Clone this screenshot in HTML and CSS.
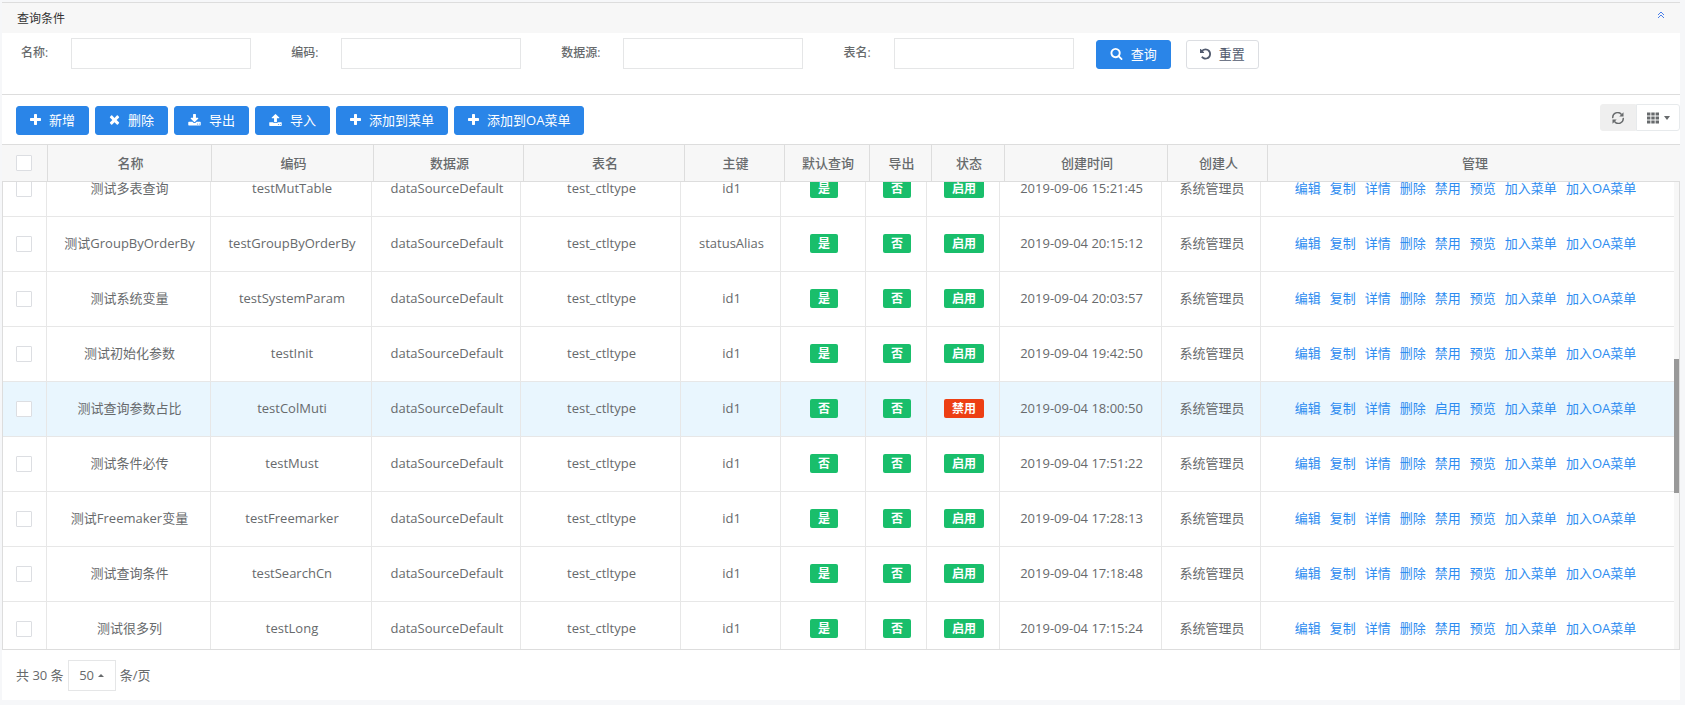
FILE: index.html
```
<!DOCTYPE html>
<html lang="zh-CN">
<head>
<meta charset="utf-8">
<title>查询条件</title>
<link rel="stylesheet" href="styles.css">
</head>
<body>
<svg class="sprite" aria-hidden="true">
  <symbol id="i-plus" viewBox="192 128 1408 1536"><path d="M1600 736v192q0 40-28 68t-68 28h-416v416q0 40-28 68t-68 28h-192q-40 0-68-28t-28-68v-416h-416q-40 0-68-28t-28-68v-192q0-40 28-68t68-28h416v-416q0-40 28-68t68-28h192q40 0 68 28t28 68v416h416q40 0 68 28t28 68z"/></symbol>
  <symbol id="i-times" viewBox="192 192 1408 1536"><path d="M1490 1322q0 40-28 68l-136 136q-28 28-68 28t-68-28l-294-294-294 294q-28 28-68 28t-68-28l-136-136q-28-28-28-68t28-68l294-294-294-294q-28-28-28-68t28-68l136-136q28-28 68-28t68 28l294 294 294-294q28-28 68-28t68 28l136 136q28 28 28 68t-28 68l-294 294 294 294q28 28 28 68z"/></symbol>
  <symbol id="i-search" viewBox="64 128 1664 1664"><path d="M1216 832q0-185-131.5-316.5t-316.5-131.5-316.5 131.5-131.5 316.5 131.5 316.5 316.5 131.5 316.5-131.5 131.5-316.5zm512 832q0 52-38 90t-90 38q-54 0-90-38l-343-342q-179 124-399 124-143 0-273.5-55.5t-225-150-150-225-55.5-273.5 55.5-273.5 150-225 225-150 273.5-55.5 273.5 55.5 225 150 150 225 55.5 273.5q0 220-124 399l343 343q37 37 37 90z"/></symbol>
  <symbol id="i-download" viewBox="64 0 1664 1600"><path d="M1344 1344q0-26-19-45t-45-19-45 19-19 45 19 45 45 19 45-19 19-45zm256 0q0-26-19-45t-45-19-45 19-19 45 19 45 45 19 45-19 19-45zm128-224v320q0 40-28 68t-68 28h-1472q-40 0-68-28t-28-68v-320q0-40 28-68t68-28h465l135 136q58 56 136 56t136-56l136-136h464q40 0 68 28t28 68zm-325-569q17 41-14 70l-448 448q-18 19-45 19t-45-19l-448-448q-31-29-14-70 17-39 59-39h256v-448q0-26 19-45t45-19h256q26 0 45 19t19 45v448h256q42 0 59 39z"/></symbol>
  <symbol id="i-upload" viewBox="64 64 1664 1600"><path d="M1344 1472q0-26-19-45t-45-19-45 19-19 45 19 45 45 19 45-19 19-45zm256 0q0-26-19-45t-45-19-45 19-19 45 19 45 45 19 45-19 19-45zm128-224v320q0 40-28 68t-68 28h-1472q-40 0-68-28t-28-68v-320q0-40 28-68t68-28h427q21 56 70.5 92t110.5 36h256q61 0 110.5-36t70.5-92h427q40 0 68 28t28 68zm-325-648q-17 40-59 40h-256v448q0 26-19 45t-45 19h-256q-26 0-45-19t-19-45v-448h-256q-42 0-59-40-17-39 14-69l448-448q18-19 45-19t45 19l448 448q31 30 14 69z"/></symbol>
  <symbol id="i-undo" viewBox="128 128 1536 1536"><path d="M1664 896q0 156-61 298t-164 245-245 164-298 61q-172 0-327-72.5t-264-204.5q-7-10-6.5-22.5t8.5-20.5l137-138q10-9 25-9 16 2 23 12 73 95 179 147t225 52q104 0 198.5-40.5t163.5-109.5 109.5-163.5 40.5-198.5-40.5-198.5-109.5-163.5-163.5-109.5-198.5-40.5q-98 0-188 35.5t-160 101.5l137 138q31 30 14 69-17 40-59 40h-448q-26 0-45-19t-19-45v-448q0-42 40-59 39-17 69 14l130 129q107-101 244.5-156.5t284.5-55.5q156 0 298 61t245 164 164 245 61 298z"/></symbol>
  <symbol id="i-refresh" viewBox="0 0 12 12"><path d="M0.800 6.200A4.900 4.900 0 0 1 9.600 2.600M11.200 5.800A4.900 4.900 0 0 1 2.400 9.400" fill="none" stroke="currentColor" stroke-width="1.400"/><path d="M11.500 0.300V4.500H7.300zM0.500 11.700V7.500H4.700z"/></symbol>
  <symbol id="i-grid" viewBox="0 0 12 12"><path d="M0 0.500h3.400v3H0zM4.300 0.500h3.400v3H4.300zM8.600 0.500H12v3H8.600zM0 4.500h3.400v3H0zM4.300 4.500h3.400v3H4.300zM8.600 4.500H12v3H8.600zM0 8.500h3.400v3H0zM4.300 8.500h3.400v3H4.300zM8.600 8.500H12v3H8.600z"/></symbol>
  <symbol id="i-up" viewBox="0 0 8 8"><path d="M1 4l3-3 3 3M1 7l3-3 3 3" fill="none" stroke="currentColor" stroke-width="1"/></symbol>
</svg>

<main class="panel">
  <header class="panel-head">
    <h1 class="panel-title">查询条件</h1>
    <button class="collapse" type="button" aria-label="收起"><svg class="ico-up"><use href="#i-up"/></svg></button>
  </header>

  <form class="search" onsubmit="return false">
    <div class="field"><label for="f-name">名称:</label><input id="f-name" type="text"></div>
    <div class="field"><label for="f-code">编码:</label><input id="f-code" type="text"></div>
    <div class="field"><label for="f-source">数据源:</label><input id="f-source" type="text"></div>
    <div class="field"><label for="f-table">表名:</label><input id="f-table" type="text"></div>
    <div class="search-actions">
      <button class="btn btn-primary" type="submit"><svg class="ico ico-wide"><use href="#i-search"/></svg>查询</button>
      <button class="btn btn-plain" type="reset"><svg class="ico"><use href="#i-undo"/></svg>重置</button>
    </div>
  </form>

  <div class="toolbar">
    <div class="toolbar-actions">
      <button class="btn btn-primary" type="button"><svg class="ico"><use href="#i-plus"/></svg>新增</button>
      <button class="btn btn-primary" type="button"><svg class="ico"><use href="#i-times"/></svg>删除</button>
      <button class="btn btn-primary" type="button"><svg class="ico ico-wide"><use href="#i-download"/></svg>导出</button>
      <button class="btn btn-primary" type="button"><svg class="ico ico-wide"><use href="#i-upload"/></svg>导入</button>
      <button class="btn btn-primary" type="button"><svg class="ico"><use href="#i-plus"/></svg>添加到菜单</button>
      <button class="btn btn-primary" type="button"><svg class="ico"><use href="#i-plus"/></svg>添加到OA菜单</button>
    </div>
    <div class="view-tools">
      <button class="tool tool-refresh" type="button" aria-label="刷新"><svg class="ico-tool"><use href="#i-refresh"/></svg></button>
      <button class="tool tool-columns" type="button" aria-label="列"><svg class="ico-tool"><use href="#i-grid"/></svg><span class="caret"></span></button>
    </div>
  </div>

  <table class="grid grid-head">
    <colgroup><col class="h-check"><col class="h-name"><col class="h-code"><col class="h-source"><col class="h-table"><col class="h-key"><col class="h-default"><col class="h-export"><col class="h-status"><col class="h-time"><col class="h-user"><col></colgroup>
    <thead><tr>
      <th><input type="checkbox" aria-label="全选"></th><th>名称</th><th>编码</th><th>数据源</th><th>表名</th><th>主键</th><th>默认查询</th><th>导出</th><th>状态</th><th>创建时间</th><th>创建人</th><th>管理</th>
    </tr></thead>
  </table>

  <div class="scroll">
    <div class="scroll-view">
      <table class="grid grid-body">
        <colgroup><col class="b-check"><col class="b-name"><col class="b-code"><col class="b-source"><col class="b-table"><col class="b-key"><col class="b-default"><col class="b-export"><col class="b-status"><col class="b-time"><col class="b-user"><col></colgroup>
        <tbody id="rows"></tbody>
      </table>
    </div>
    <div class="rail"><div class="thumb"></div></div>
  </div>

  <footer class="pager">
    <span>共 30 条</span>
    <button class="page-size" type="button">50<span class="caret caret-up"></span></button>
    <span>条/页</span>
  </footer>
</main>
<script src="rows.js"></script>
</body>
</html>
```
FILE: styles.css
```
* { box-sizing: border-box; }

body {
  margin: 0;
  height: 100vh;
  padding: 2px 5px 5px 2px;
  background: #f6f7f9;
  color: #676a6c;
  font: 13px/18px "Open Sans", "Noto Sans CJK SC", sans-serif;
}

button, input { font: inherit; color: inherit; }
button { cursor: pointer; }
.sprite { display: none; }
svg { display: block; fill: currentColor; }

.panel {
  height: 100%;
  display: flex;
  flex-direction: column;
  background: #fff;
  border-top: 1px solid #dddddd;
}

.panel-head {
  display: flex;
  justify-content: space-between;
  align-items: center;
  height: 30px;
  padding: 0 15px;
  background: #f7f7f7;
}
.panel-title { margin: 0; padding-top: 2px; font-size: 12px; font-weight: 400; color: #333; }
.collapse { padding: 0 0 6px; border: 0; background: none; color: #4a7fe8; }
.ico-up { width: 8px; height: 8px; }

.search {
  display: flex;
  flex-wrap: wrap;
  align-items: flex-start;
  padding: 5px 19px 25px;
  border-bottom: 1px solid #dddddd;
}
.field { display: flex; align-items: flex-start; margin-right: 40px; }
.field label { margin-right: 23px; padding-top: 6px; font-size: 12px; font-weight: 500; }
.field input {
  width: 180px;
  height: 31px;
  padding: 0 8px;
  border: 1px solid #e5e6e7;
  background: #fff;
}
.field:nth-child(4) { margin-right: 22px; }
.search-actions { display: flex; gap: 15px; padding-top: 2px; }

.btn {
  display: flex;
  align-items: center;
  gap: 8px;
  height: 29px;
  padding: 0 13px 2px;
  border: 1px solid transparent;
  border-radius: 3px;
  white-space: nowrap;
}
.btn-primary { background: #2a85e8; border-color: #2a85e8; color: #fff; }
.btn-plain { background: #fff; border-color: #dcdee2; color: #515a6e; }
.ico { width: 11px; height: 12px; }
.ico-wide { width: 13px; }

.toolbar {
  display: flex;
  justify-content: space-between;
  align-items: flex-start;
  padding: 9px 0 9px 14px;
}
.toolbar-actions { display: flex; gap: 6px; padding-top: 2px; }
.view-tools { display: flex; }
.tool {
  display: flex;
  align-items: center;
  justify-content: center;
  gap: 5px;
  height: 27px;
  padding: 0;
  border: 1px solid #e7eaec;
}
.tool-refresh { width: 36px; background: #efefef; border-color: #efefef; border-radius: 3px 0 0 3px; }
.tool-columns { width: 44px; background: #fff; border-radius: 0 3px 3px 0; }
.ico-tool { width: 12px; height: 12px; }
.caret {
  border: 3px solid transparent;
  border-top: 4px solid currentColor;
  border-bottom: 0;
}
.caret-up { border-top: 0; border-bottom: 3px solid currentColor; }

.grid { width: 100%; table-layout: fixed; border-collapse: separate; border-spacing: 0; }
.grid th, .grid td { padding: 0 0 0 2px; text-align: center; vertical-align: middle; white-space: nowrap; }
.grid th:last-child, .grid td:last-child { border-right: 0; }
.grid th:first-child, .grid td:first-child { padding: 0 2px 0 0; }

.grid-head { background: #f7f7f7; border-top: 1px solid #dddddd; border-bottom: 1px solid #dddddd; }
.grid-head th { height: 36px; font-weight: 500; border-right: 1px solid #dddddd; }
.grid-body td { height: 55px; border-right: 1px solid #e7e7e7; border-bottom: 1px solid #e7e7e7; }
.grid-body td:not(:first-child) { padding-bottom: 2px; }
.grid-body td:last-child { padding-right: 6px; }
.grid-body .active { background: #e9f6fe; }

.h-check { width: 46px; }
.h-name { width: 164px; }
.h-code { width: 162px; }
.h-source { width: 150px; }
.h-table { width: 161px; }
.h-key { width: 100px; }
.h-default { width: 85px; }
.h-export { width: 62px; }
.h-status { width: 73px; }
.h-time { width: 163px; }
.h-user { width: 100px; }

.b-check { width: 44px; }
.b-name { width: 164px; }
.b-code { width: 161px; }
.b-source { width: 149px; }
.b-table { width: 160px; }
.b-key { width: 100px; }
.b-default { width: 85px; }
.b-export { width: 61px; }
.b-status { width: 73px; }
.b-time { width: 162px; }
.b-user { width: 99px; }

input[type="checkbox"] {
  appearance: none;
  display: block;
  width: 16px;
  height: 16px;
  margin: 0 auto;
  border: 1px solid #dcdee2;
  border-radius: 1px;
  background: #fff;
}

.scroll {
  flex: 1;
  min-height: 0;
  display: flex;
  border: 1px solid #dddddd;
  border-top: 0;
}
.scroll-view { flex: 1; min-width: 0; overflow: hidden; }
.scroll-view .grid { margin-top: -20px; }
.rail { position: relative; width: 5px; background: #f7f7f7; }
.thumb { position: absolute; top: 38%; left: 0; width: 5px; height: 28.5%; background: #999; }

.tag {
  display: inline-block;
  padding: 0 8px;
  border-radius: 2px;
  background: #19be6b;
  color: #fff;
  font-size: 12px;
  font-weight: 700;
  line-height: 19px;
}
.tag-off { background: #ed3f14; }

.links { display: flex; justify-content: center; gap: 9px; }
.links a { color: #2d8cf0; text-decoration: none; }

.pager { display: flex; align-items: center; gap: 4px; height: 50px; padding: 0 14px; }
.page-size {
  display: flex;
  align-items: center;
  justify-content: center;
  gap: 4px;
  width: 48px;
  height: 31px;
  padding: 0;
  border: 1px solid #e5e6e7;
  background: #fff;
}
```
FILE: rows.js
```
const rows = [
  ["测试多表查询", "testMutTable", "id1", "是", "启用", "2019-09-06 15:21:45"],
  ["测试GroupByOrderBy", "testGroupByOrderBy", "statusAlias", "是", "启用", "2019-09-04 20:15:12"],
  ["测试系统变量", "testSystemParam", "id1", "是", "启用", "2019-09-04 20:03:57"],
  ["测试初始化参数", "testInit", "id1", "是", "启用", "2019-09-04 19:42:50"],
  ["测试查询参数占比", "testColMuti", "id1", "否", "禁用", "2019-09-04 18:00:50"],
  ["测试条件必传", "testMust", "id1", "否", "启用", "2019-09-04 17:51:22"],
  ["测试Freemaker变量", "testFreemarker", "id1", "是", "启用", "2019-09-04 17:28:13"],
  ["测试查询条件", "testSearchCn", "id1", "是", "启用", "2019-09-04 17:18:48"],
  ["测试很多列", "testLong", "id1", "是", "启用", "2019-09-04 17:15:24"]
];

document.getElementById("rows").innerHTML = rows.map(([name, code, key, isDefault, status, time]) => {
  const off = status === "禁用";
  const links = ["编辑", "复制", "详情", "删除", off ? "启用" : "禁用", "预览", "加入菜单", "加入OA菜单"]
    .map(text => `<a href="#">${text}</a>`).join("");
  return `<tr class="${off ? "active" : ""}">
    <td><input type="checkbox" aria-label="${name}"></td>
    <td>${name}</td><td>${code}</td><td>dataSourceDefault</td><td>test_ctltype</td><td>${key}</td>
    <td><span class="tag">${isDefault}</span></td>
    <td><span class="tag">否</span></td>
    <td><span class="tag ${off ? "tag-off" : ""}">${status}</span></td>
    <td>${time}</td><td>系统管理员</td>
    <td><div class="links">${links}</div></td>
  </tr>`;
}).join("");
```
